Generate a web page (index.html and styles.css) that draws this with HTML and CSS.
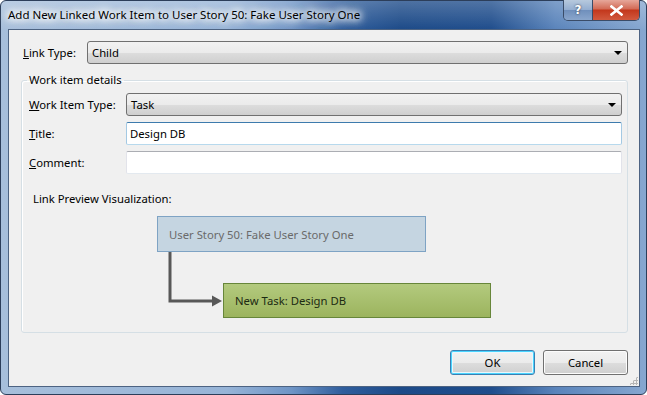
FILE: index.html
```html
<!DOCTYPE html>
<html lang="en">
  <head>
    <meta charset="UTF-8" />
    <title>Add New Linked Work Item</title>
    <link rel="stylesheet" href="styles.css">
  </head>
  <body>
    <div class="window">
      <div class="titlebar">
        <span class="title">Add New Linked Work Item to User Story 50: Fake User Story One</span>
        <div class="caption-buttons">
          <span class="cap-btn help">?</span>
          <span class="cap-btn close">
            <svg width="13" height="11" viewBox="0 0 13 11">
              <path d="M1.5 1.5 L11.5 9.5 M11.5 1.5 L1.5 9.5" stroke="#fff" stroke-width="2.6" stroke-linecap="square" fill="none" />
            </svg>
          </span>
        </div>
      </div>

      <div class="client">
        <div class="row link-row">
          <label class="lbl link-lbl"><u>L</u>ink Type:</label>
          <div class="combo">Child<span class="arrow"></span></div>
        </div>

        <fieldset class="group">
          <legend>Work item details</legend>
          <div class="row field">
            <label class="lbl"><u>W</u>ork Item Type:</label>
            <div class="combo">Task<span class="arrow"></span></div>
          </div>
          <div class="row field">
            <label class="lbl"><u>T</u>itle:</label>
            <div class="textbox focused">Design DB</div>
          </div>
          <div class="row field">
            <label class="lbl"><u>C</u>omment:</label>
            <div class="textbox"></div>
          </div>

          <div class="preview-label">Link Preview Visualization:</div>
          <div class="preview">
            <svg class="connector" width="70" height="60" viewBox="0 0 70 60">
              <path d="M14 0 V49 H57" stroke="#585858" stroke-width="3" fill="none" />
              <polygon points="56,43.5 66,49 56,54.5" fill="#585858" />
            </svg>
            <div class="node parent-node">User Story 50: Fake User Story One</div>
            <div class="node child-node">New Task: Design DB</div>
          </div>
        </fieldset>

        <div class="buttons">
          <button class="btn default">OK</button>
          <button class="btn">Cancel</button>
        </div>
        <span class="grip"></span>
      </div>
    </div>
  </body>
</html>
```

FILE: styles.css
```css
body {
  margin: 0;
  background: #ffffff;
  font-family: "Noto Sans", "Open Sans", sans-serif;
  font-size: 11.3px;
  color: #000;
}
.window {
  width: 647px;
  height: 395px;
  box-sizing: border-box;
  padding: 0 6px 7px 7px;
  border-radius: 6px;
  border: 1px solid #2c3e5a;
  background:
    linear-gradient(to bottom, rgba(255,255,255,0.22) 0, rgba(255,255,255,0) 29px),
    linear-gradient(to right, #a7bfdb 0%, #97b4d7 35%, #6f95c6 45%, #2f5d9c 53%, #1c4a88 62%, #1f4d8c 76%, #5a84bb 86%, #86a7d0 100%);
  display: flex;
  flex-direction: column;
}
.titlebar {
  height: 28px;
  display: flex;
  align-items: flex-start;
  justify-content: space-between;
}
.title {
  margin-top: 6px;
  font-size: 11.5px;
  color: #000;
  text-shadow: 0 0 6px #fff, 0 0 8px #fff, 0 0 10px #fff, 0 0 12px #fff, 0 0 14px #fff;
  white-space: nowrap;
}
.caption-buttons {
  display: flex;
  margin-top: -1px;
  border: 1px solid #3a4c68;
  border-top: none;
  border-radius: 0 0 5px 5px;
  overflow: hidden;
  height: 20px;
}
.cap-btn {
  display: flex;
  align-items: center;
  justify-content: center;
  height: 20px;
  color: #fff;
  font-family: "DejaVu Sans", sans-serif;
  font-weight: bold;
  font-size: 12px;
  text-shadow: 0 0 2px #223;
}
.help {
  width: 28px;
  border-right: 1px solid #3a4c68;
  background: linear-gradient(to bottom, #b7c9dd 0%, #93add0 50%, #6f8fbc 51%, #8aa6cc 100%);
}
.close {
  width: 46px;
  background: linear-gradient(to bottom, #e6a79a 0%, #d26a55 45%, #c3371c 50%, #d2593e 100%);
}
.client {
  flex: 1;
  position: relative;
  background: #f0f0f0;
  border: 1px solid #4d6382;
  padding: 11px 11px 0 14px;
}
.row {
  display: flex;
  align-items: center;
}
.lbl {
  flex: none;
}
.link-lbl {
  width: 64px;
}
.combo {
  flex: 1;
  position: relative;
  height: 21px;
  line-height: 21px;
  padding-left: 4px;
  border: 1px solid #707070;
  border-radius: 3px;
  background: linear-gradient(to bottom, #f2f2f2 0%, #ebebeb 50%, #dddddd 51%, #cfcfcf 100%);
}
.arrow {
  position: absolute;
  right: 5px;
  top: 9px;
  border-left: 4px solid transparent;
  border-right: 4px solid transparent;
  border-top: 4px solid #000;
}
.group {
  margin: 8px 0 0 -2px;
  padding: 5px 5px 14px 7px;
  border: 1px solid #d5dfe5;
  border-radius: 3px;
  box-shadow: inset 1px 1px 0 #fff;
}
.group legend {
  padding: 0 2px;
  margin-left: -2px;
  line-height: 16px;
}
.field {
  margin-bottom: 6px;
}
.field .lbl {
  width: 97px;
}
.textbox {
  flex: 1;
  height: 21px;
  line-height: 21px;
  padding-left: 3px;
  background: #fff;
  border: 1px solid #e2e3ea;
  border-top-color: #abadb3;
  border-bottom-color: #e3e9ef;
  border-radius: 2px;
}
.textbox.focused {
  border-color: #a4c9e3;
  border-top-color: #3d7bad;
  border-bottom-color: #b7d9ed;
}
.preview-label {
  margin: 17px 0 0 4px;
  line-height: 16px;
}
.preview {
  position: relative;
  padding-top: 9px;
}
.connector {
  position: absolute;
  left: 127px;
  top: 45px;
}
.node {
  box-sizing: border-box;
  display: flex;
  align-items: center;
  padding-left: 11px;
}
.parent-node {
  margin-left: 128px;
  width: 269px;
  height: 36px;
  background: #c5d5e1;
  border: 1px solid #7ea3c4;
  color: #6a6a6a;
}
.child-node {
  margin: 31px 0 0 194px;
  width: 268px;
  height: 35px;
  background: linear-gradient(to bottom, #b3ca7e, #9cb45e);
  border: 1px solid #67863a;
  color: #1c2a12;
}
.buttons {
  display: flex;
  justify-content: flex-end;
  gap: 8px;
  margin-top: 17px;
}
.btn {
  width: 85px;
  height: 25px;
  font-family: inherit;
  font-size: 11.3px;
  color: #000;
  border: 1px solid #707070;
  border-radius: 3px;
  background: linear-gradient(to bottom, #f2f2f2 0%, #ebebeb 50%, #dddddd 51%, #cfcfcf 100%);
  box-shadow: inset 0 0 0 1px #fcfcfc;
}
.btn.default {
  border-color: #3c7fb1;
  box-shadow: inset 0 0 0 1px #48d4ff, inset 0 0 0 2px #e9f6fd;
}
.grip {
  position: absolute;
  right: 1px;
  bottom: 1px;
  width: 9px;
  height: 9px;
  background:
    radial-gradient(circle, #b5b5b5 1px, transparent 1.2px) 0 0 / 3px 3px;
  clip-path: polygon(100% 0, 100% 100%, 0 100%);
}
```
